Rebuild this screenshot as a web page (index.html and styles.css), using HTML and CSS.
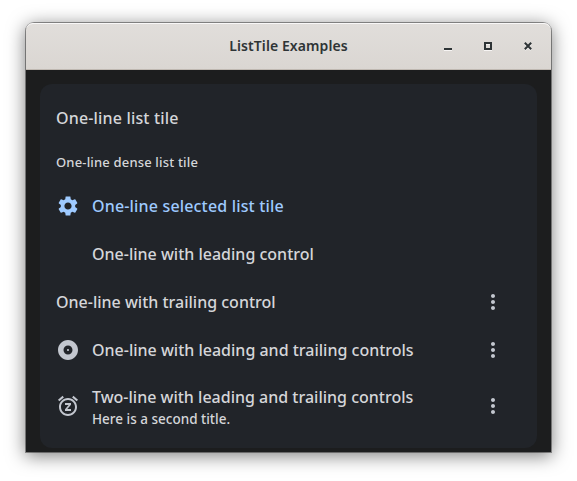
FILE: index.html
```
<!DOCTYPE html>
<html lang="en">
<head>
<meta charset="utf-8">
<title>ListTile Examples</title>
<link rel="stylesheet" href="styles.css">
</head>
<body>
<svg class="symbols" aria-hidden="true">
  <symbol id="more" viewBox="0 0 24 24"><path d="M12 8c1.100 0 2-.9 2-2s-.9-2-2-2-2 .9-2 2 .9 2 2 2zm0 2c-1.100 0-2 .9-2 2s.9 2 2 2 2-.9 2-2-.9-2-2-2zm0 6c-1.100 0-2 .9-2 2s.9 2 2 2 2-.9 2-2-.9-2-2-2z"/></symbol>
</svg>
<main class="window">
  <header class="titlebar">
    <h1 class="title">ListTile Examples</h1>
    <div class="controls">
      <svg class="control" viewBox="0 0 8 9"><path class="shine" d="M0 7h8v2H0z"/><path d="M0 6h8v2H0z"/></svg>
      <svg class="control" viewBox="0 0 8 9"><path class="shine" d="M0 8h8v1H0zM2 2h4v1H2z"/><path fill-rule="evenodd" d="M0 0h8v8H0zM2 2v4h4V2z"/></svg>
      <svg class="control" viewBox="0 0 8 9"><path class="cross shine-line" d="M1 2l6 6M7 2L1 8"/><path class="cross" d="M.8.8l6.400 6.400M7.200.8L.8 7.200"/></svg>
    </div>
  </header>
  <section class="content">
    <div class="card">
      <div class="tile"><span class="label roomy">One-line list tile</span></div>
      <div class="tile dense"><span class="label">One-line dense list tile</span></div>
      <div class="tile selected">
        <svg class="icon" viewBox="0 0 24 24"><path d="M19.140 12.940c.04-.3.060-.61.060-.94 0-.32-.02-.64-.07-.94l2.030-1.580c.18-.14.230-.41.120-.61l-1.920-3.320c-.12-.22-.37-.29-.59-.22l-2.390.96c-.5-.38-1.030-.7-1.620-.94l-.36-2.540c-.04-.24-.24-.41-.48-.41h-3.840c-.24 0-.43.170-.47.410l-.36 2.540c-.59.240-1.130.570-1.620.940l-2.390-.96c-.22-.08-.47 0-.59.220L2.740 8.870c-.12.210-.08.470.120.610l2.030 1.580c-.05.300-.09.630-.09.940s.02.640.070.940l-2.030 1.580c-.18.140-.23.410-.12.610l1.920 3.320c.12.220.370.290.590.220l2.390-.96c.5.380 1.030.700 1.620.940l.36 2.540c.05.240.240.410.480.410h3.840c.24 0 .44-.17.470-.41l.36-2.540c.59-.24 1.130-.56 1.620-.94l2.390.960c.22.080.470 0 .59-.22l1.920-3.320c.12-.22.070-.47-.12-.61l-2.010-1.580zM12 15.600c-1.980 0-3.600-1.620-3.600-3.600s1.620-3.600 3.600-3.600 3.600 1.620 3.600 3.600-1.620 3.600-3.600 3.600z"/></svg>
        <span class="label roomy">One-line selected list tile</span>
      </div>
      <div class="tile"><span class="icon"></span><span class="label">One-line with leading control</span></div>
      <div class="tile"><span class="label">One-line with trailing control</span><svg class="icon more"><use href="#more"/></svg></div>
      <div class="tile">
        <svg class="icon" viewBox="0 0 24 24"><path d="M12 2C6.480 2 2 6.480 2 12s4.480 10 10 10 10-4.480 10-10S17.520 2 12 2zm0 14.500c-2.490 0-4.500-2.010-4.500-4.500S9.510 7.500 12 7.500s4.500 2.010 4.500 4.500-2.010 4.500-4.500 4.500zm0-5.500c-.55 0-1 .45-1 1s.45 1 1 1 1-.45 1-1-.45-1-1-1z"/></svg>
        <span class="label">One-line with leading and trailing controls</span><svg class="icon more"><use href="#more"/></svg>
      </div>
      <div class="tile two-line">
        <svg class="icon" viewBox="0 0 24 24"><path d="M7.880 3.390L6.600 1.860 2 5.710l1.290 1.530 4.590-3.850zM22 5.720l-4.600-3.860-1.290 1.530 4.600 3.860L22 5.720zM12 4c-4.970 0-9 4.030-9 9s4.020 9 9 9c4.970 0 9-4.030 9-9s-4.030-9-9-9zm0 16c-3.870 0-7-3.130-7-7s3.130-7 7-7 7 3.130 7 7-3.130 7-7 7zm-3-9h3.630L9 15.200V17h6v-2h-3.630L15 10.800V9H9v2z"/></svg>
        <div class="text"><span class="label">Two-line with leading and trailing controls</span><span class="subtitle">Here is a second title.</span></div><svg class="icon more"><use href="#more"/></svg>
      </div>
    </div>
  </section>
</main>
</body>
</html>
```
FILE: styles.css
```
* { box-sizing: border-box; }
body {
  margin: 0;
  padding: 23px 26px 0;
  height: 481px;
  overflow: hidden;
  background: #fff;
  font-family: "Noto Sans", sans-serif;
}
.symbols { display: none; }
.window {
  width: 525px;
  height: 429px;
  border-radius: 8px 8px 0 0;
  background: #1c1d1e;
  box-shadow: 0 0 0 1px rgba(0,0,0,.38), 0 3px 18px 1px rgba(0,0,0,.5);
}
.titlebar {
  display: grid;
  grid-template-columns: 1fr auto 1fr;
  align-items: center;
  height: 47px;
  padding-right: 19px;
  padding-left: 19px;
  border-radius: 7px 7px 0 0;
  border-bottom: 1px solid #bfb8b1;
  background: linear-gradient(#e1dedb, #dad6d2);
  box-shadow: inset 0 1px #f9f8f8;
}
.title {
  grid-column: 2;
  margin: 0;
  font-size: 14px;
  line-height: 20px;
  font-weight: 600;
  letter-spacing: .08px;
  color: #2e3436;
  white-space: nowrap;
}
.controls { display: flex; justify-content: flex-end; gap: 32px; }
.control { width: 8px; height: 9px; fill: #2e3436; }
.control .shine { fill: #f7f5f4; }
.control .cross { fill: none; stroke: #2e3436; stroke-width: 2; }
.control .shine-line { stroke: #f7f5f4; }
.content { padding: 14px 14px 4px; }
.card {
  height: 364px;
  padding: 10px 16px;
  border-radius: 12px;
  background: #212429;
}
.tile {
  display: flex;
  align-items: center;
  gap: 12px;
  height: 48px;
  color: #d5d6d9;
  white-space: nowrap;
}
.label { font-size: 16px; line-height: 24px; font-weight: 500; }
.roomy { letter-spacing: .17px; }
.dense { height: 40px; }
.dense .label { font-size: 13px; letter-spacing: .17px; }
.selected, .selected .icon { color: #9ecaff; }
.icon { flex: none; width: 24px; height: 24px; color: #c3c7cf; fill: currentColor; }
.more { margin-left: auto; margin-right: 16px; }
.two-line { height: 64px; padding-top: 2px; }
.two-line .icon { margin-top: -2px; }
.text { display: flex; flex-direction: column; }
.subtitle { font-size: 13.5px; line-height: 20px; font-weight: 500; }
```
